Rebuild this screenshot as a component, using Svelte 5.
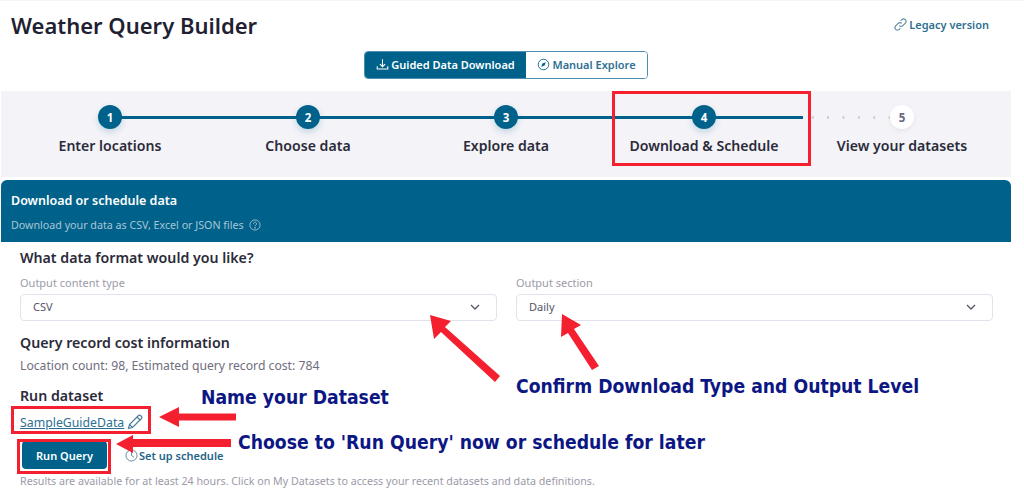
<script>
  const steps = [
    { n: 1, label: 'Enter locations', done: true },
    { n: 2, label: 'Choose data', done: true },
    { n: 3, label: 'Explore data', done: true },
    { n: 4, label: 'Download & Schedule', done: true },
    { n: 5, label: 'View your datasets', done: false }
  ]
</script>

<div class="page">
  <header class="top">
    <h1>Weather Query Builder</h1>
    <a class="legacy" href="#legacy">
      <svg width="13" height="13" viewBox="0 0 16 16" fill="none" stroke="#5f8aa3" stroke-width="1.4">
        <path d="M6.6 9.4a3 3 0 0 0 4.3 0l3-3a3 3 0 0 0-4.3-4.3L8.2 3.500" />
        <path d="M9.400 6.600a3 3 0 0 0-4.300 0l-3 3a3 3 0 0 0 4.300 4.300l1.400-1.400" />
      </svg>
      Legacy version
    </a>
  </header>

  <div class="toggle">
    <button class="tab active">
      <svg width="13" height="13" viewBox="0 0 16 16" fill="none" stroke="#fff" stroke-width="1.300">
        <path d="M8 1.500v9M4.800 7.500 8 10.700l3.200-3.200M1.500 10v3.500h13V10" />
      </svg>
      Guided Data Download
    </button>
    <button class="tab">
      <svg width="13" height="13" viewBox="0 0 16 16" fill="none" stroke="#00628b" stroke-width="1.100">
        <circle cx="8" cy="8" r="6.500" />
        <path d="M10.800 5.200 9.300 9.300 5.200 10.800l1.500-4.100z" fill="#00628b" stroke="none" />
      </svg>
      Manual Explore
    </button>
  </div>

  <section class="steps">
    {#each steps as step, i}
      <div class="step">
        <div class="track">
          {#if i > 0}
            <span class="seg left" class:dotted={!step.done}></span>
          {/if}
          {#if i < steps.length - 1}
            <span class="seg right"></span>
          {/if}
          <span class="circle" class:todo={!step.done}>{step.n}</span>
        </div>
        <div class="label">{step.label}</div>
      </div>
    {/each}
  </section>

  <section class="panel">
    <div class="panel-head">
      <h2>Download or schedule data</h2>
      <p>
        Download your data as CSV, Excel or JSON files
        <svg width="12" height="12" viewBox="0 0 16 16" fill="none" stroke="#a9c5d4" stroke-width="1.100">
          <circle cx="8" cy="8" r="6.800" />
          <path d="M5.900 6.300a2.100 2.100 0 1 1 3.200 1.800c-.7.400-1.100.8-1.100 1.700" />
          <circle cx="8" cy="11.900" r=".5" fill="#a9c5d4" />
        </svg>
      </p>
    </div>

    <div class="panel-body">
      <h3>What data format would you like?</h3>
      <div class="fields">
        <div class="field">
          <span class="field-label">Output content type</span>
          <div class="select">
            CSV
            <svg width="10" height="6" viewBox="0 0 10 6" fill="none" stroke="#555566" stroke-width="1.300">
              <path d="M1 1l4 4 4-4" />
            </svg>
          </div>
        </div>
        <div class="field">
          <span class="field-label">Output section</span>
          <div class="select">
            Daily
            <svg width="10" height="6" viewBox="0 0 10 6" fill="none" stroke="#555566" stroke-width="1.300">
              <path d="M1 1l4 4 4-4" />
            </svg>
          </div>
        </div>
      </div>

      <h3 class="cost-title">Query record cost information</h3>
      <p class="cost">Location count: 98, Estimated query record cost: 784</p>

      <h3 class="run-title">Run dataset</h3>
      <div class="name-row">
        <a class="dataset" href="#dataset">SampleGuideData</a>
        <svg width="16" height="16" viewBox="0 0 16 16" fill="none" stroke="#4d7f9c" stroke-width="1.200">
          <path d="M1.500 14.500l1-4L11.500 1.500a1.400 1.400 0 0 1 2 0l1 1a1.400 1.400 0 0 1 0 2L5.500 13.500z" />
          <path d="M2.500 10.500l3 3M10 3l3 3" />
        </svg>
      </div>
      <div class="actions">
        <button class="run">Run Query</button>
        <a class="schedule" href="#schedule">
          <svg width="13" height="13" viewBox="0 0 16 16" fill="none" stroke="#5f8aa3" stroke-width="1.200">
            <circle cx="8" cy="8" r="6.800" />
            <path d="M8 3.500V8l3.200 2.200" />
          </svg>
          Set up schedule
        </a>
      </div>
      <p class="note">Results are available for at least 24 hours. Click on My Datasets to access your recent datasets and data definitions.</p>
    </div>
  </section>

  <!-- annotations drawn over the screenshot -->
  <svg class="marks" width="1024" height="503" viewBox="0 0 1024 503">
    <g fill="none" stroke="#f5202f" stroke-width="3">
      <rect x="613.500" y="92.500" width="196" height="72" />
      <rect x="12.500" y="407.500" width="137" height="25" />
      <rect x="18.500" y="440.500" width="91" height="32" />
    </g>
    <g fill="#f5202f">
      <path d="M430 315l21 6-6 6 55 49-5 6-54-50-7 7z" />
      <path d="M562 314l19 11-7 4 25 37-7 4-24-37-7 4z" />
      <path d="M159 417l20-10v6.500h57v7h-57v6.500z" />
      <path d="M116 444l17-9v4h98v8h-98v6z" />
    </g>
  </svg>
  <span class="note-text name">Name your Dataset</span>
  <span class="note-text choose">Choose to 'Run Query' now or schedule for later</span>
  <span class="note-text confirm">Confirm Download Type and Output Level</span>
</div>

<style>
  :global(body) {
    margin: 0;
    background: #fff;
  }
  .page {
    position: relative;
    width: 1024px;
    height: 503px;
    overflow: hidden;
    font-family: 'Noto Sans', 'Open Sans', sans-serif;
    color: #2b2b3a;
    border-top: 1px solid #f5f5f7;
    box-sizing: border-box;
  }
  .top {
    display: flex;
    justify-content: space-between;
    align-items: center;
    height: 50px;
    padding: 0 35px 0 11px;
  }
  h1 {
    margin: 0 0 2px;
    font-size: 22px;
    font-weight: 600;
    color: #221f33;
  }
  .legacy {
    display: flex;
    align-items: center;
    gap: 2px;
    margin-bottom: 4px;
    font-size: 11px;
    font-weight: 600;
    color: #2f6f92;
    text-decoration: none;
  }
  .toggle {
    display: flex;
    width: 284px;
    height: 28px;
    margin: 0 0 12px 364px;
    box-sizing: border-box;
    border: 1px solid #4d8fb0;
    border-radius: 4px;
    overflow: hidden;
  }
  .tab {
    display: flex;
    align-items: center;
    justify-content: center;
    gap: 2px;
    flex: 1;
    padding: 0 0 1px;
    border: none;
    background: #fff;
    color: #2f6f92;
    font: 600 11px 'Noto Sans', sans-serif;
  }
  .tab.active {
    flex: 0 0 161px;
    background: #00628b;
    color: #fff;
  }
  .steps {
    display: grid;
    grid-template-columns: repeat(5, 198px);
    width: 1010px;
    height: 86px;
    margin: 0 0 3px 1px;
    padding: 14px 10px 0;
    box-sizing: border-box;
    background: #f3f3f8;
  }
  .step {
    display: flex;
    flex-direction: column;
    align-items: center;
  }
  .track {
    position: relative;
    display: flex;
    justify-content: center;
    width: 100%;
  }
  .seg {
    position: absolute;
    top: 11px;
    width: 50%;
    height: 3px;
    background: #00628b;
  }
  .seg.left {
    left: 0;
  }
  .seg.right {
    right: 0;
  }
  .seg.dotted {
    background: radial-gradient(circle, #c4c4ce 1px, transparent 1.300px) 2px 0 / 15.400px 3px repeat-x;
  }
  .circle {
    position: relative;
    display: flex;
    align-items: center;
    justify-content: center;
    width: 24px;
    height: 24px;
    border-radius: 50%;
    background: #00628b;
    color: #fff;
    font-size: 11.500px;
    font-weight: 700;
    box-shadow: 0 3px 6px rgba(0, 98, 139, 0.2);
  }
  .circle.todo {
    background: #fff;
    color: #6b6880;
    box-shadow: 0 2px 5px rgba(0, 0, 0, 0.06);
  }
  .label {
    margin-top: 7px;
    font-size: 14.100px;
    font-weight: 600;
    line-height: 20px;
    color: #2b2b3a;
    white-space: nowrap;
  }
  .panel-head {
    width: 1010px;
    height: 62px;
    margin-left: 1px;
    padding: 12px 10px 0;
    box-sizing: border-box;
    background: #00628b;
    border-radius: 6px 6px 0 0;
  }
  h2 {
    margin: 0;
    font-size: 12.500px;
    font-weight: 600;
    line-height: 18px;
    color: #fff;
  }
  .panel-head p {
    display: flex;
    align-items: center;
    gap: 5px;
    margin: 7px 0 0;
    font-size: 10.700px;
    line-height: 16px;
    color: #a9c5d4;
  }
  .panel-body {
    padding: 6px 31px 0 20px;
  }
  h3 {
    margin: 0;
    font-size: 14.200px;
    font-weight: 600;
    line-height: 20px;
    color: #2b2b3a;
  }
  .fields {
    display: grid;
    grid-template-columns: 1fr 1fr;
    gap: 19px;
    margin-top: 7px;
  }
  .field-label {
    display: block;
    font-size: 11px;
    line-height: 16px;
    color: #9c9aa8;
  }
  .select {
    display: flex;
    align-items: center;
    justify-content: space-between;
    height: 27px;
    margin-top: 3px;
    padding: 0 16px 2px 12px;
    box-sizing: border-box;
    border: 1px solid #e2e2ec;
    border-radius: 4px;
    font-size: 11px;
    color: #55536a;
  }
  .cost-title {
    margin-top: 12px;
  }
  .cost {
    margin: 4px 0 0;
    font-size: 12.200px;
    line-height: 18px;
    color: #6f6d7d;
  }
  .run-title {
    margin-top: 11px;
  }
  .name-row {
    display: flex;
    align-items: center;
    gap: 3px;
    height: 20px;
    margin-top: 6px;
  }
  .dataset {
    font-size: 12.300px;
    color: #2f6f92;
    text-decoration: underline;
  }
  .actions {
    display: flex;
    align-items: center;
    gap: 18px;
    margin-top: 9px;
    padding-left: 2px;
  }
  .run {
    width: 85px;
    height: 28px;
    padding: 0;
    border: none;
    border-radius: 4px;
    background: #00628b;
    color: #fff;
    font: 600 11px 'Noto Sans', sans-serif;
  }
  .schedule {
    display: flex;
    align-items: center;
    gap: 1px;
    font-size: 11px;
    font-weight: 600;
    color: #1f6488;
    text-decoration: none;
  }
  .note {
    margin: 4px 0 0;
    font-size: 10.700px;
    line-height: 16px;
    color: #9c9aa8;
    white-space: nowrap;
  }
  .marks {
    position: absolute;
    top: -1px;
    left: 0;
    pointer-events: none;
  }
  .note-text {
    position: absolute;
    font-family: 'DejaVu Sans', sans-serif;
    font-stretch: condensed;
    font-weight: 700;
    font-size: 19.200px;
    line-height: 22px;
    color: #0c1784;
    white-space: nowrap;
  }
  .name {
    left: 201px;
    top: 386px;
  }
  .choose {
    left: 238px;
    top: 431px;
  }
  .confirm {
    left: 516px;
    top: 375px;
  }
</style>
